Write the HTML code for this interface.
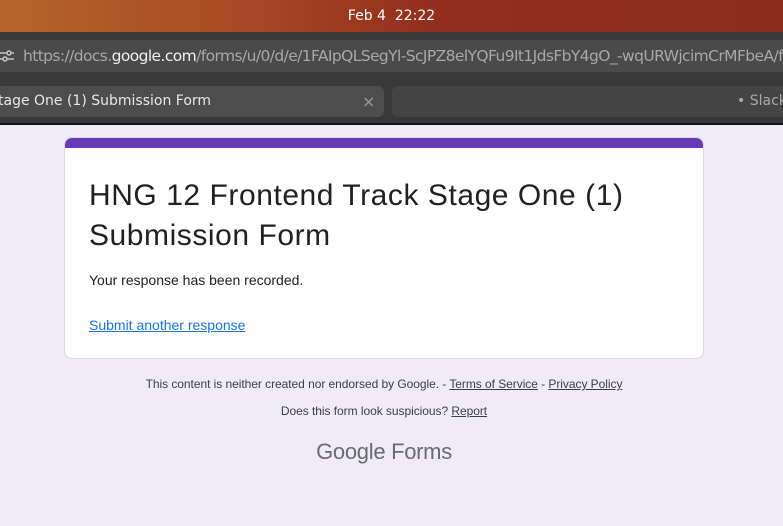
<!DOCTYPE html>
<html><head><meta charset="utf-8"><style>
*{margin:0;padding:0;box-sizing:border-box}
html,body{width:783px;height:526px;overflow:hidden;background:#f0ebf8;font-family:"Liberation Sans",Arial,sans-serif}
.top{position:absolute;left:0;top:0;width:783px;height:32px;background:linear-gradient(90deg,#b5652a 0%,#a84a25 30%,#922f1e 55%,#8c2d1c 100%);color:#fff;font-size:14px;text-align:center;line-height:32px;font-family:"DejaVu Sans",sans-serif}
.bar{position:absolute;left:0;top:32px;width:783px;height:92px;background:#383838}
.url{position:absolute;left:0;top:40px;width:783px;height:32px;background:#4a4a4a;color:#a8a8a8;font-size:15.5px;line-height:32px;padding-left:23px;white-space:nowrap;font-family:"DejaVu Sans",sans-serif;letter-spacing:-0.6px;overflow:hidden}
.url b{color:#f0f0f0;font-weight:normal}
.tab{position:absolute;top:86px;height:31px;background:#4d4d4d;border-radius:6px;color:#e8e8e8;font-size:14px;line-height:31px;font-family:"DejaVu Sans",sans-serif;white-space:nowrap;overflow:hidden}
.line{position:absolute;left:0;top:123px;width:783px;height:2px;background:#111}
.card{position:absolute;left:64px;top:137px;width:640px;height:222px;background:#fff;border:1px solid #dadce0;border-radius:8px;overflow:hidden}
.card .band{height:10px;background:#673ab7}
h1{position:absolute;left:24px;top:38px;font-weight:normal;font-size:30px;line-height:40px;color:#202124;letter-spacing:0.55px}
.msg{position:absolute;left:24px;top:134px;font-size:14px;color:#202124}
.lnk{position:absolute;left:24px;top:179px;font-size:14px;color:#1a73e8;text-decoration:underline}
.f1,.f2{position:absolute;left:0;width:768px;text-align:center;font-size:12px;color:#3c4043;letter-spacing:-0.05px}
.f1{top:377px}.f2{top:404px}
.f1 u,.f2 u{color:#3c4043}
.logo{position:absolute;left:0;width:768px;text-align:center;top:439px;font-size:22px;color:#6b6b6b;letter-spacing:-0.3px}
</style></head><body>
<div class="top">Feb 4&nbsp;&nbsp;22:22</div>
<div class="bar"></div>
<div class="url"><svg style="position:absolute;left:0;top:9px" width="16" height="14"><g stroke="#ccc" stroke-width="1.4" fill="none"><line x1="0" y1="4" x2="14" y2="4"/><line x1="0" y1="10" x2="14" y2="10"/><circle cx="9" cy="4" r="2" fill="#4a4a4a"/><circle cx="5" cy="10" r="2" fill="#4a4a4a"/></g></svg>https://docs.<b>google.com</b>/forms/u/0/d/e/1FAIpQLSegYl-ScJPZ8elYQFu9It1JdsFbY4gO_-wqURWjcimCrMFbeA/fo</div>
<div class="tab" style="left:-6px;width:390px;padding-left:4px">tage One (1) Submission Form<span style="position:absolute;left:368px;color:#9a9a9a;font-size:16px">×</span></div>
<div class="tab" style="left:392px;width:400px;background:#444"><span style="position:absolute;left:345px;color:#aaa">• Slack</span></div>
<div class="line"></div>
<div class="card"><div class="band"></div>
<h1>HNG 12 Frontend Track Stage One (1)<br>Submission Form</h1>
<div class="msg">Your response has been recorded.</div>
<div class="lnk">Submit another response</div>
</div>
<div class="f1">This content is neither created nor endorsed by Google. - <u>Terms of Service</u> - <u>Privacy Policy</u></div>
<div class="f2">Does this form look suspicious? <u>Report</u></div>
<div class="logo">Google Forms</div>
</body></html>
